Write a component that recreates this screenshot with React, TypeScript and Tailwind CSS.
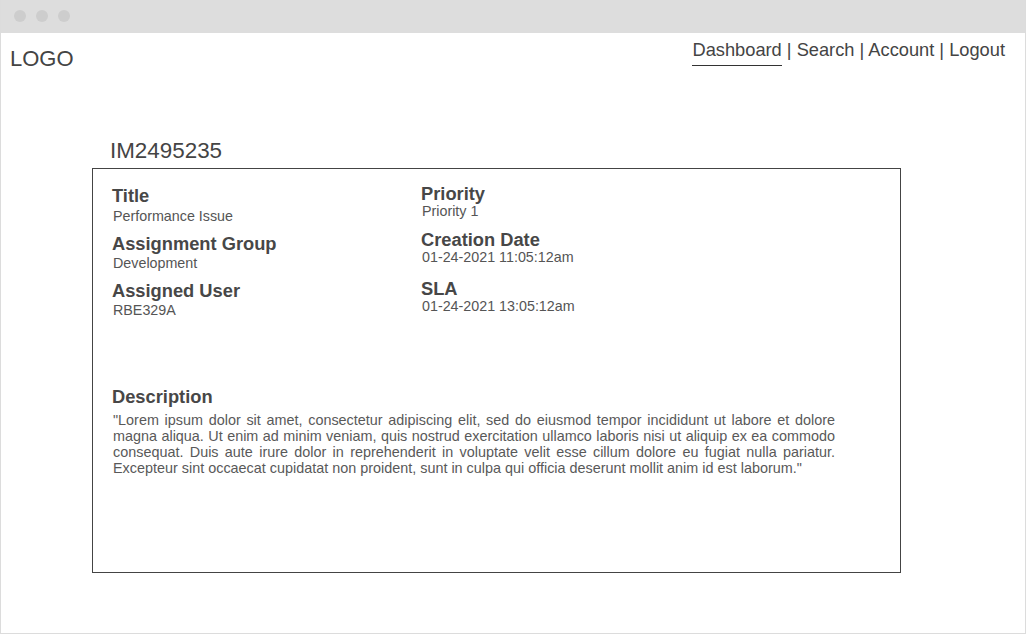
import React from "react";

const font = { fontFamily: '"Liberation Sans", Arial, sans-serif' };

function Field({ label, value, valueLh, gap }: { label: string; value: string; valueLh: string; gap: string }) {
  return (
    <div className={gap}>
      <div className="text-[18.3px] leading-[20px] font-bold text-[#474747]">{label}</div>
      <div className={`text-[14.3px] ${valueLh} text-[#555555] pl-px`}>{value}</div>
    </div>
  );
}

export default function App() {
  return (
    <div style={font} className="w-[1026px] h-[634px] bg-white border-x border-b border-[#dcdcdc] flex flex-col overflow-hidden">
      <div className="h-[33px] bg-[#dddddd] flex items-start gap-[10px] pl-[13px] pt-[10px] shrink-0">
        <div className="w-[12px] h-[12px] rounded-full bg-[#cdcdcd]" />
        <div className="w-[12px] h-[12px] rounded-full bg-[#cdcdcd]" />
        <div className="w-[12px] h-[12px] rounded-full bg-[#cdcdcd]" />
      </div>

      <div className="flex justify-between items-start">
        <div className="pl-[9px] pt-[13px] text-[22px] leading-[25px] text-[#444444]">LOGO</div>
        <nav className="pr-[20px] pt-[6px] text-[18.25px] leading-[21px] text-[#444444] flex whitespace-pre">
          <span className="border-b border-[#333333] pb-[5px]">Dashboard</span>
          <span> | Search | Account | Logout</span>
        </nav>
      </div>

      <div className="pl-[109px] mt-[67px] text-[22.4px] leading-[25px] text-[#444444]">IM2495235</div>

      <div className="ml-[91px] mt-[5px] w-[809px] h-[405px] border border-[#444444] pl-[19px] flex flex-col">
        <div className="flex">
          <div className="w-[309px] pt-[17px]">
            <Field label="Title" value="Performance Issue" valueLh="leading-[19px] pt-px" gap="" />
            <Field label="Assignment Group" value="Development" valueLh="leading-[18px]" gap="mt-[8px]" />
            <Field label="Assigned User" value="RBE329A" valueLh="leading-[18px]" gap="mt-[9px]" />
          </div>
          <div className="pt-[15px]">
            <Field label="Priority" value="Priority 1" valueLh="leading-[14px]" gap="" />
            <Field label="Creation Date" value="01-24-2021 11:05:12am" valueLh="leading-[14px]" gap="mt-[12px]" />
            <Field label="SLA" value="01-24-2021 13:05:12am" valueLh="leading-[14px]" gap="mt-[15px]" />
          </div>
        </div>

        <div className="mt-[68px]">
          <div className="text-[18.3px] leading-[20px] font-bold text-[#474747]">Description</div>
          <p className="mt-[5px] w-[723px] pl-px text-[14.4px] leading-[16px] text-[#595959] text-justify">
            "Lorem ipsum dolor sit amet, consectetur adipiscing elit, sed do eiusmod tempor incididunt ut labore et dolore magna aliqua. Ut enim ad minim veniam, quis nostrud exercitation ullamco laboris nisi ut aliquip ex ea commodo consequat. Duis aute irure dolor in reprehenderit in voluptate velit esse cillum dolore eu fugiat nulla pariatur. Excepteur sint occaecat cupidatat non proident, sunt in culpa qui officia deserunt mollit anim id est laborum."
          </p>
        </div>
      </div>
    </div>
  );
}
